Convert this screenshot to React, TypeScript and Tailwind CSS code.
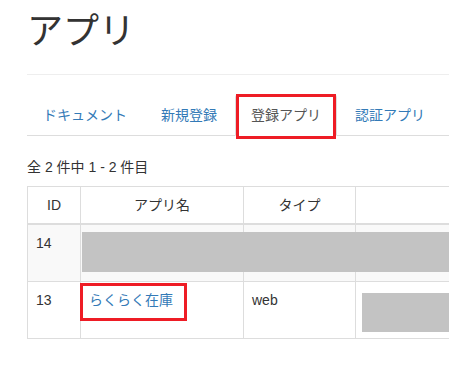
import React from 'react';

const tabs = [
  { label: 'ドキュメント', active: false },
  { label: '新規登録', active: false },
  { label: '登録アプリ', active: true },
  { label: '認証アプリ', active: false },
];

const App: React.FC = () => {
  return (
    <div className="w-[449px] h-[383px] overflow-hidden bg-white px-[27px] text-[14px] leading-[20px] text-[#333] font-['Liberation_Sans','Noto_Sans_CJK_JP',sans-serif]">
      {/* Page title */}
      <h1 className="pt-[12px] text-[36px] leading-[40px] font-normal text-[#333]">アプリ</h1>
      <div className="mt-[22px] w-[600px] border-t border-[#eee]" />

      {/* Tabs */}
      <div className="relative mt-[19px]">
        <ul className="flex w-[600px] border-b border-[#ddd]">
          {tabs.map((tab) => (
            <li key={tab.label} className="mr-[2px] mb-[-1px]">
              <a
                className={
                  tab.active
                    ? 'block px-[15px] py-[10px] border border-[#ddd] border-b-transparent rounded-t-[4px] bg-white text-[#555]'
                    : 'block px-[15px] py-[10px] border border-transparent text-[#337ab7]'
                }
              >
                {tab.label}
              </a>
            </li>
          ))}
        </ul>
        {/* annotation */}
        <div className="absolute left-[209px] top-0 w-[100px] h-[45px] border-[3px] border-[#ee1c25]" />
      </div>

      <p className="mt-[21px]">全 2 件中 1 - 2 件目</p>

      {/* Table */}
      <div className="relative mt-[9px]">
        <table className="w-[600px] table-fixed border-collapse border border-[#ddd]">
          <colgroup>
            <col className="w-[53px]" />
            <col className="w-[163px]" />
            <col className="w-[112px]" />
            <col />
          </colgroup>
          <thead>
            <tr>
              <th className="border border-b-2 border-[#ddd] p-[8px] text-center font-normal align-bottom">ID</th>
              <th className="border border-b-2 border-[#ddd] p-[8px] text-center font-normal align-bottom">アプリ名</th>
              <th className="border border-b-2 border-[#ddd] p-[8px] text-center font-normal align-bottom">タイプ</th>
              <th className="border border-b-2 border-[#ddd] p-[8px] text-center font-normal align-bottom"></th>
            </tr>
          </thead>
          <tbody>
            <tr className="bg-[#f9f9f9]">
              <td className="border border-[#ddd] p-[8px] align-top">14</td>
              <td className="border border-[#ddd] p-[8px] align-top"></td>
              <td className="border border-[#ddd] p-[8px] align-top"></td>
              <td className="border border-[#ddd] p-[8px] align-top">
                <div className="h-[40px]" />
              </td>
            </tr>
            <tr>
              <td className="border border-[#ddd] p-[8px] align-top">13</td>
              <td className="border border-[#ddd] p-[8px] align-top">
                <a className="text-[#337ab7]">らくらく在庫</a>
              </td>
              <td className="border border-[#ddd] p-[8px] align-top">web</td>
              <td className="border border-[#ddd] p-[8px] align-top">
                <div className="h-[40px]" />
              </td>
            </tr>
          </tbody>
        </table>

        {/* redactions */}
        <div className="absolute left-[55px] top-[46px] w-[400px] h-[40px] bg-[#c3c3c3]" />
        <div className="absolute left-[335px] top-[107px] w-[200px] h-[39px] bg-[#c3c3c3]" />
        {/* annotation */}
        <div className="absolute left-[53px] top-[97px] w-[107px] h-[38px] border-[3px] border-[#ee1c25]" />
      </div>
    </div>
  );
};

export default App;
